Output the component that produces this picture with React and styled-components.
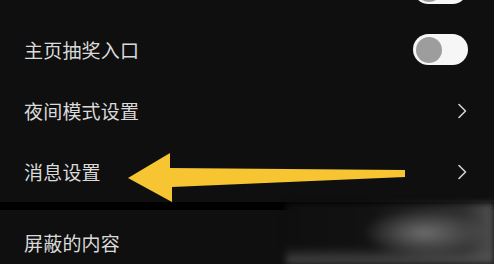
import React from "react";
import styled, { createGlobalStyle } from "styled-components";

const GlobalStyle = createGlobalStyle`
  html, body {
    margin: 0;
    padding: 0;
    background: #0f0f0f;
  }
  body {
    font-family: "Noto Sans CJK SC", "Noto Sans", sans-serif;
  }
`;

const Screen = styled.div`
  position: relative;
  width: 494px;
  height: 264px;
  overflow: hidden;
  background: #000;
`;

// list is scrolled: the first row sits mostly above the top edge
const Scroller = styled.div`
  display: flex;
  flex-direction: column;
  margin-top: -42px;
`;

const Group = styled.div`
  display: flex;
  flex-direction: column;
  background: #0f0f0f;
  margin-bottom: ${(p) => p.$gap || 0}px;
`;

const Row = styled.div`
  display: flex;
  align-items: center;
  justify-content: space-between;
  height: ${(p) => p.$h || 61}px;
  padding: 0 27px 0 24px;
  box-sizing: border-box;
`;

const Label = styled.span`
  color: #dadada;
  font-size: 19px;
  line-height: 1;
  letter-spacing: 0.2px;
  transform: translateY(${(p) => p.$shift || 0}px);
`;

const Track = styled.div`
  display: flex;
  align-items: center;
  width: 55px;
  height: 31px;
  border-radius: 16px;
  background: #f6f6f6;
  padding: 0 3px;
  box-sizing: border-box;
  margin-right: -1px;
`;

const Knob = styled.div`
  width: 26px;
  height: 26px;
  border-radius: 50%;
  background: #9d9d9d;
`;

const Chevron = () => (
  <svg width="10" height="16" viewBox="0 0 10 16">
    <path
      d="M2 1.5 L8.5 8 L2 14.5"
      fill="none"
      stroke="#d0d0d0"
      strokeWidth="1.6"
      strokeLinecap="round"
      strokeLinejoin="round"
    />
  </svg>
);

const Toggle = () => (
  <Track>
    <Knob />
  </Track>
);

const Watermark = styled.div`
  position: absolute;
  left: 286px;
  top: 203px;
  width: 208px;
  height: 61px;
  background:
    radial-gradient(ellipse 62px 24px at 138px 30px, rgba(128,128,128,0.8), rgba(90,90,90,0) 100%),
    linear-gradient(to bottom, rgba(0,0,0,0) 72%, rgba(85,85,85,0.85) 100%),
    linear-gradient(to right, #0f0f0f 0%, #121212 40%, #2e2e2e 85%, #505050 100%);
  filter: blur(3px);
`;

const Arrow = styled.svg`
  position: absolute;
  left: 0;
  top: 0;
`;

export default function App() {
  return (
    <>
      <GlobalStyle />
      <Screen>
        <Scroller>
          <Group $gap={8}>
            <Row>
              <Label $shift={1}>个性化内容推荐</Label>
              <Toggle />
            </Row>
            <Row>
              <Label>主页抽奖入口</Label>
              <Toggle />
            </Row>
            <Row>
              <Label>夜间模式设置</Label>
              <Chevron />
            </Row>
            <Row>
              <Label>消息设置</Label>
              <Chevron />
            </Row>
          </Group>
          <Group>
            <Row $h={64}>
              <Label>屏蔽的内容</Label>
              <Chevron />
            </Row>
          </Group>
        </Scroller>
        <Watermark />
        <Arrow width="494" height="264" viewBox="0 0 494 264">
          <polygon
            points="128,178 170,153 170,168 405,170 405,177 172,187 172,202"
            fill="#f6c531"
          />
        </Arrow>
      </Screen>
    </>
  );
}
